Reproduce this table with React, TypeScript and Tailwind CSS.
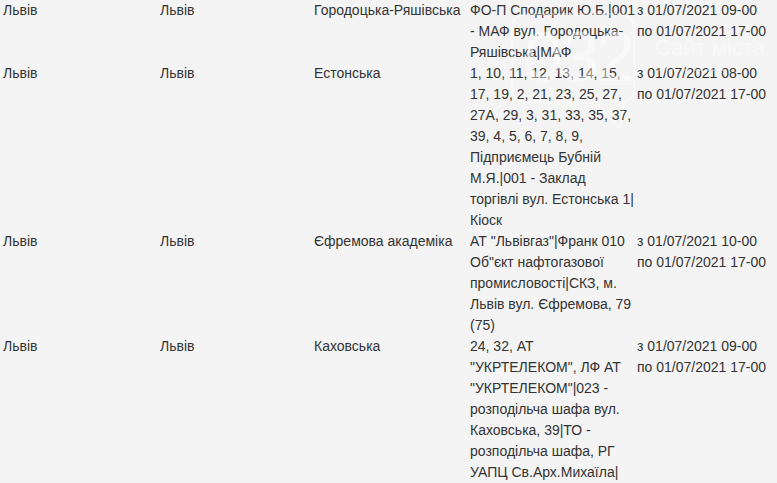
import React from 'react';

interface Outage {
  city: string;
  place: string;
  street: string;
  lines: string[];
  from: string;
  to: string;
}

const rows: Outage[] = [
  {
    city: 'Львів',
    place: 'Львів',
    street: 'Городоцька-Ряшівська',
    lines: ['ФО-П Сподарик Ю.Б.|001', '- МАФ вул. Городоцька-', 'Ряшівська|МАФ'],
    from: 'з 01/07/2021 09-00',
    to: 'по 01/07/2021 17-00',
  },
  {
    city: 'Львів',
    place: 'Львів',
    street: 'Естонська',
    lines: [
      '1, 10, 11, 12, 13, 14, 15,',
      '17, 19, 2, 21, 23, 25, 27,',
      '27А, 29, 3, 31, 33, 35, 37,',
      '39, 4, 5, 6, 7, 8, 9,',
      'Підприємець Бубній',
      'М.Я.|001 - Заклад',
      'торгівлі вул. Естонська 1|',
      'Кіоск',
    ],
    from: 'з 01/07/2021 08-00',
    to: 'по 01/07/2021 17-00',
  },
  {
    city: 'Львів',
    place: 'Львів',
    street: 'Єфремова академіка',
    lines: [
      'АТ "Львівгаз"|Франк 010',
      'Об"єкт нафтогазової',
      'промисловості|СКЗ, м.',
      'Львів вул. Єфремова, 79',
      '(75)',
    ],
    from: 'з 01/07/2021 10-00',
    to: 'по 01/07/2021 17-00',
  },
  {
    city: 'Львів',
    place: 'Львів',
    street: 'Каховська',
    lines: [
      '24, 32, АТ',
      '"УКРТЕЛЕКОМ", ЛФ АТ',
      '"УКРТЕЛЕКОМ"|023 -',
      'розподільча шафа вул.',
      'Каховська, 39|ТО -',
      'розподільча шафа, РГ',
      'УАПЦ Св.Арх.Михаїла|',
    ],
    from: 'з 01/07/2021 09-00',
    to: 'по 01/07/2021 17-00',
  },
];

// faint site logo laid over the table
const Watermark = () => (
  <div className="pointer-events-none absolute left-[500px] top-0 h-[135px] w-[277px] text-white/45">
    <svg className="absolute left-0 top-0" width="150" height="135" viewBox="0 0 150 135" fill="none">
      <path
        d="M28 14 H118 Q134 14 134 30 V87 Q134 103 118 103 H124 L120 128 L96 103 H28 Q12 103 12 87 V30 Q12 14 28 14 Z"
        stroke="currentColor"
        strokeWidth="1.5"
        strokeLinejoin="round"
      />
    </svg>
    <div className="absolute left-[24px] top-[22px] font-['Liberation_Sans',sans-serif] text-[70px] font-thin leading-[70px] tracking-[-3px]">
      032
    </div>
    <div className="absolute left-[155px] top-[35px] h-[36px] overflow-hidden font-['Liberation_Sans',sans-serif] text-[22px] leading-[26px]">
      <div>Сайт міста</div>
      <div>Львова</div>
    </div>
  </div>
);

export default function App() {
  return (
    <div className="relative h-[483px] w-[777px] overflow-hidden bg-[#f4f4f4] font-['Liberation_Sans',sans-serif] text-[14px] leading-[21px] text-[#333]">
      <table className="w-[777px] table-fixed border-collapse">
        <colgroup>
          <col className="w-[157px]" />
          <col className="w-[154px]" />
          <col className="w-[156px]" />
          <col className="w-[168px]" />
          <col />
        </colgroup>
        <tbody>
          {rows.map((r, i) => (
            <tr key={i} className="align-top">
              <td className="p-0 pl-[3px]">{r.city}</td>
              <td className="p-0 pl-[3px]">{r.place}</td>
              <td className="p-0 pl-[3px] whitespace-nowrap">{r.street}</td>
              <td className="p-0 pl-[3px] whitespace-nowrap">
                {r.lines.map((l, j) => (
                  <div key={j}>{l}</div>
                ))}
              </td>
              <td className="p-0 pl-[2px] whitespace-nowrap">
                <div>{r.from}</div>
                <div>{r.to}</div>
              </td>
            </tr>
          ))}
        </tbody>
      </table>
      <Watermark />
    </div>
  );
}
